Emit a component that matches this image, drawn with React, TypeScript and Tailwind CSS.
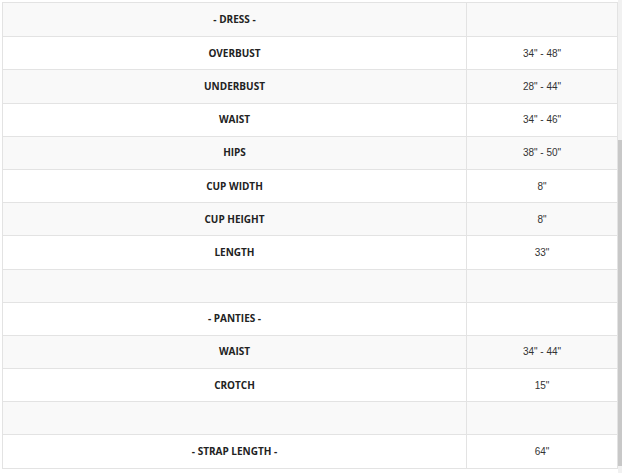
const rows: { label: string; value: string }[] = [
  { label: "- DRESS -", value: "" },
  { label: "OVERBUST", value: "34\" - 48\"" },
  { label: "UNDERBUST", value: "28\" - 44\"" },
  { label: "WAIST", value: "34\" - 46\"" },
  { label: "HIPS", value: "38\" - 50\"" },
  { label: "CUP WIDTH", value: "8\"" },
  { label: "CUP HEIGHT", value: "8\"" },
  { label: "LENGTH", value: "33\"" },
  { label: "", value: "" },
  { label: "- PANTIES -", value: "" },
  { label: "WAIST", value: "34\" - 44\"" },
  { label: "CROTCH", value: "15\"" },
  { label: "", value: "" },
  { label: "- STRAP LENGTH -", value: "64\"" },
];

export default function App() {
  return (
    <div className="flex h-[473px] w-[622px] bg-white">
      <div className="pl-[2px] pt-[2px]">
        <div className="w-[616px] border border-[#e3e3e3]">
          {rows.map((row, i) => (
            <div
              key={i}
              className={`flex h-[33.2px] ${i > 0 ? "border-t border-[#e3e3e3]" : ""} ${
                i % 2 === 0 ? "bg-[#f9f9f9]" : "bg-white"
              }`}
            >
              <div className="flex w-[464px] items-center justify-center border-r border-[#e3e3e3] font-['Open_Sans',sans-serif] text-[10px] font-bold text-[#222]">
                {row.label}
              </div>
              <div className="flex flex-1 items-center justify-center font-['Liberation_Sans',Arial,sans-serif] text-[10px] text-[#333]">
                {row.value}
              </div>
            </div>
          ))}
        </div>
      </div>
      {/* scrollbar */}
      <div className="ml-auto flex w-[4px] flex-col bg-[#f1f1f1]">
        <div className="h-[140px]" />
        <div className="h-[326px] bg-[#c8c8c8]" />
      </div>
    </div>
  );
}
